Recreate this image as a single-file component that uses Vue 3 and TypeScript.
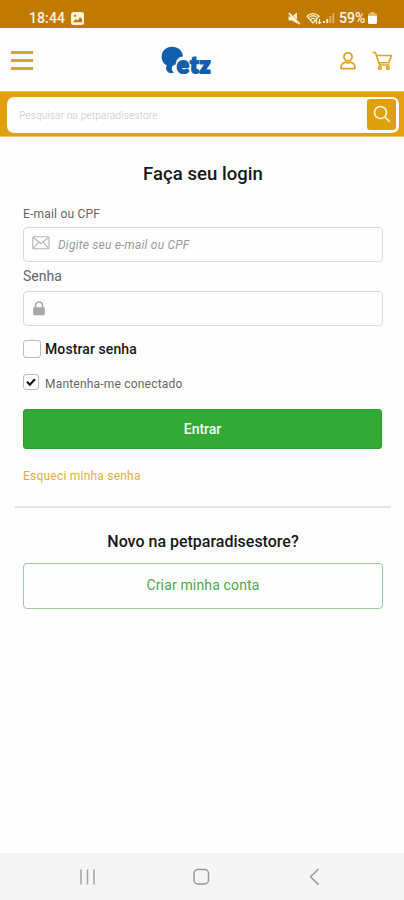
<script setup lang="ts">
import { ref } from 'vue'

const email = ref<string>('')
const password = ref<string>('')
const showPassword = ref<boolean>(false)
const keepConnected = ref<boolean>(true)
</script>

<template>
  <div class="screen">
    <div class="status">
      <span class="time">18:44</span>
      <svg class="photo" width="13" height="13" viewBox="0 0 13 13">
        <rect width="13" height="13" rx="2.5" fill="#fff3dc" />
        <path d="M2 10.3 4.6 7l2 1.8L9.2 5l1.9 2.4v2.9z" fill="#c17a00" />
        <circle cx="4" cy="3.8" r="1.1" fill="#c17a00" />
      </svg>
      <div class="signals">
        <svg width="13" height="13" viewBox="0 0 13 13">
          <path d="M.5 4.500H4L9 .5v11L4 8.500H.5z" fill="#fff3dc" />
          <path d="M1.800.5 12.500 11.200" stroke="#c17a00" stroke-width=".8" />
          <path d="M.8 1.200 11.700 12.100" stroke="#fff3dc" stroke-width="1.700" />
        </svg>
        <svg class="wifi" width="16" height="13" viewBox="0 0 16 13" fill="none" stroke="#fff0d2">
          <path d="M1 4.200Q7 -1 13 4.200L7 11z" stroke-width="1.200" />
          <path d="M3.300 5.200Q7 2.300 10.700 5.200M5 7.200Q7 5.600 9 7.200" stroke-width="1.400" />
          <path d="M10.500 12V7.500m-1.500 1.500 1.500-1.600M13.500 7v4.500m-1.500-1.600 1.500 1.700 1.500-1.700" stroke-width="1.100" />
        </svg>
        <svg class="cell" width="12" height="12" viewBox="0 0 12 12">
          <path d="M0 9h2v2H0zM3.200 7h2v4h-2z" fill="#fff0d2" />
          <path d="M6.400 4h1.800v7H6.400zM9.400 1h1.800v10H9.400z" fill="#dfb46c" />
        </svg>
        <span class="percent">59%</span>
        <svg class="battery" width="9" height="12" viewBox="0 0 9 12">
          <path d="M2.500 0h4v1.500H8q1 0 1 1V4H0V2.500q0-1 1-1h1.500z" fill="#e5bd79" />
          <path d="M0 4h9v6.500q0 1.500-1.500 1.500h-6Q0 12 0 10.500z" fill="#fffaf0" />
        </svg>
      </div>
    </div>

    <header class="header">
      <button class="plain menu" aria-label="Menu"><i></i><i></i><i></i></button>
      <div class="logo">
        <svg class="blob" width="24" height="30" viewBox="0 0 24 30">
          <path d="M11 .8C17 .8 21.500 4.500 22 10.500C18 10.500 15 13.500 14.600 18.500C10.500 19.500 9.300 23 12.800 26.500C7 29 3.500 23.500 5.800 19.300C-2.500 16 -1 .8 11 .8Z" fill="#125fb0" />
        </svg>
        <span class="word">etz</span>
      </div>
      <div class="actions">
        <svg width="16" height="20" viewBox="0 0 16 20" fill="none" stroke="#e1a126" stroke-width="1.800">
          <circle cx="8" cy="5.800" r="4" />
          <path d="M1.100 17.600v-1.800q0-3.300 4.400-4.700q2.500 1.500 5 0q4.400 1.400 4.400 4.700v1.800z" stroke-linejoin="round" />
        </svg>
        <svg class="cart" width="21" height="20" viewBox="0 0 21 20" fill="none" stroke="#e1a126" stroke-width="1.600" stroke-linejoin="round">
          <path d="M.5 1.500h3l4 12.500h10M5.200 4.500h14.300l-2.800 7.300H7.200" />
          <circle cx="7.800" cy="17" r="1.400" />
          <circle cx="15.800" cy="17" r="1.400" />
        </svg>
      </div>
    </header>

    <div class="searchbar">
      <div class="search">
        <span class="hint">Pesquisar na petparadisestore</span>
        <button class="plain find" aria-label="Pesquisar">
          <svg width="18" height="18" viewBox="0 0 18 18" fill="none" stroke="#fff5d9" stroke-width="1.700">
            <circle cx="7.500" cy="7.500" r="6" />
            <path d="m12 12 4.700 4.800" />
          </svg>
        </button>
      </div>
    </div>

    <main class="form">
      <h1><span>Faça seu login</span></h1>
      <label class="label mail-label" for="email">E-mail ou CPF</label>
      <div class="field">
        <svg class="envelope" width="18" height="14" viewBox="0 0 18 14" fill="none" stroke="#b4b4b4" stroke-width="1.100">
          <rect x=".8" y=".8" width="16.200" height="12" rx="1" />
          <path d="m1.200 1.500 7.700 6 7.700-6M1.200 12.300l5.300-6M16.600 12.300l-5.300-6" />
        </svg>
        <input id="email" v-model="email" placeholder="Digite seu e-mail ou CPF" />
      </div>
      <label class="label pass-label" for="password">Senha</label>
      <div class="field">
        <svg class="lock" width="12" height="15" viewBox="0 0 12 15">
          <path d="M2.500 7V4.500a3.500 3.500 0 0 1 7 0V7" fill="none" stroke="#a8a8a8" stroke-width="1.700" />
          <rect x=".2" y="6.300" width="11.600" height="8" rx="1" fill="#a8a8a8" />
        </svg>
        <input id="password" v-model="password" :type="showPassword ? 'text' : 'password'" />
      </div>
      <div class="check show" @click="showPassword = !showPassword">
        <span class="box"><svg v-if="showPassword" width="10" height="9" viewBox="0 0 10 9"><path d="m1 4 2.800 3L9 1.200" fill="none" stroke="#111" stroke-width="2.200" /></svg></span>
        <span>Mostrar senha</span>
      </div>
      <div class="check keep" @click="keepConnected = !keepConnected">
        <span class="box"><svg v-if="keepConnected" width="10" height="9" viewBox="0 0 10 9"><path d="m1 3.800 2.800 2.900L9 1.200" fill="none" stroke="#111" stroke-width="2.100" /></svg></span>
        <span class="keep-text">Mantenha-me conectado</span>
      </div>
      <button class="plain enter">Entrar</button>
      <a class="forgot">Esqueci minha senha</a>
    </main>

    <section class="signup">
      <h2>Novo na petparadisestore?</h2>
      <button class="plain create">Criar minha conta</button>
    </section>

    <nav class="nav">
      <svg width="18" height="18" viewBox="0 0 18 18"><path d="M2 1.500v15M8.500 1.500v15M15 1.500v15" stroke="#a3a3a3" stroke-width="1.500" /></svg>
      <svg width="18" height="18" viewBox="0 0 18 18"><rect x="1" y="1.500" width="14.500" height="14.500" rx="4" fill="none" stroke="#969696" stroke-width="1.500" /></svg>
      <svg width="18" height="18" viewBox="0 0 18 18"><path d="M12.500 1 4.500 8.800l8 7.800" fill="none" stroke="#999" stroke-width="1.500" /></svg>
    </nav>
  </div>
</template>

<style>
body { margin: 0; background: #fefefe; }
</style>

<style scoped>
.screen { width: 404px; height: 900px; display: flex; flex-direction: column; overflow: hidden; background: #fefefe; font-family: Roboto, "Liberation Sans", sans-serif; color: #171717; }
.screen * { box-sizing: border-box; }
.screen svg { display: block; flex: none; }
.plain { border: 0; padding: 0; margin: 0; font-family: inherit; background: none; }
.status { height: 28px; flex: none; padding: 8px 27px 0 29px; display: flex; align-items: center; background: #c17a00; color: #fff5e2; font-size: 14px; line-height: 20px; }
.time { width: 36px; letter-spacing: 0.1px; font-weight: 500; white-space: nowrap; }
.photo { margin-left: 6px; }
.signals { margin-left: auto; display: flex; align-items: center; }
.wifi { margin-left: 5px; }
.cell { margin-left: 1px; }
.percent { width: 27px; margin-left: 4px; font-weight: 500; }
.battery { margin-left: 2px; }
.header { height: 63px; flex: none; display: flex; align-items: center; padding: 2px 11px 0; }
.menu { width: 22px; display: flex; flex-direction: column; gap: 5px; }
.menu i { height: 3px; width: 22px; background: #e0a325; }
.logo { width: 60px; height: 30px; margin-left: 128px; display: flex; }
.word { margin: 5px 0 0 -8px; font: 900 22px/27px Lato, sans-serif; letter-spacing: 1.500px; color: #125fb0; -webkit-text-stroke: 2.200px #125fb0; }
.actions { margin-left: auto; display: flex; align-items: center; gap: 16px; }
.searchbar { height: 46px; flex: none; padding: 5px 5px 5px 7px; background: #e2a010; border-top: 1px solid #eebc58; border-bottom: 1px solid #efc46d; }
.search { height: 36px; display: flex; align-items: center; padding: 0 3px 0 12px; background: #fefefe; border-radius: 7px; }
.hint { font-size: 10px; color: #c6c6c6; font-weight: 300; letter-spacing: 0.200px; }
.find { width: 29px; height: 31px; margin: -2px 0 0 auto; border-radius: 3px; background: #dfa00e; display: flex; align-items: center; justify-content: center; }
.form { height: 369px; flex: none; display: flex; flex-direction: column; margin: 0 21px 0 23px; }
h1 { margin: 25px 0 0; height: 25px; text-align: center; font-size: 18.500px; line-height: 25px; font-weight: 500; letter-spacing: 0.050px; }
.label { color: #656565; font-size: 12px; line-height: 16px; letter-spacing: 0.200px; }
.mail-label { margin-top: 19px; height: 21px; }
.pass-label { margin-top: 6px; height: 23px; font-size: 14px; letter-spacing: 0; }
.field { height: 35px; flex: none; display: flex; align-items: center; border: 1.500px solid #dadada; border-radius: 4px; padding-left: 8px; }
.envelope { margin-bottom: 3px; }
.lock { margin-left: 1px; margin-bottom: 1px; }
input { border: 0; outline: 0; padding: 0; margin: 0 8px; flex: 1; min-width: 0; height: 24px; background: transparent; font: 12px/24px Roboto, sans-serif; letter-spacing: 0.220px; }
input::placeholder { color: #999; font-style: italic; opacity: 1; }
.check { display: flex; align-items: center; }
.box { display: flex; align-items: center; justify-content: center; flex: none; border: 1.500px solid #bcbcbc; border-radius: 3px; }
.show { height: 18px; margin-top: 14px; gap: 4px; font-size: 14px; font-weight: 500; letter-spacing: 0.100px; line-height: 16px; }
.show .box { width: 18px; height: 18px; }
.keep { height: 16px; margin-top: 16px; gap: 6px; font-size: 12px; letter-spacing: 0.200px; color: #666; }
.keep .box { width: 16px; height: 16px; }
.keep-text { padding-top: 3px; }
.enter { width: 359px; height: 40px; margin-top: 19px; flex: none; border-radius: 3px; background: #35a936; border: 1px solid #25a126; color: #f7fff5; font-size: 14px; font-weight: 500; }
.forgot { margin-top: 19px; color: #e0ae42; font-size: 12px; line-height: 16px; letter-spacing: 0.220px; }
.signup { margin: 0 13px 0 15px; border-top: 2px solid #e4e4e4; padding: 24px 8px 0; display: flex; flex-direction: column; }
h2 { margin: 0; height: 31px; text-align: center; font-size: 16px; line-height: 20px; font-weight: 500; }
.create { height: 46px; padding-bottom: 2px; border: 1px solid #9acb9d; border-radius: 4px; color: #4ca851; font-size: 14px; letter-spacing: 0.150px; }
.nav { height: 47px; flex: none; margin-top: auto; display: flex; justify-content: space-between; align-items: center; padding: 0 80px 0 79px; background: #f5f5f5; }
</style>
